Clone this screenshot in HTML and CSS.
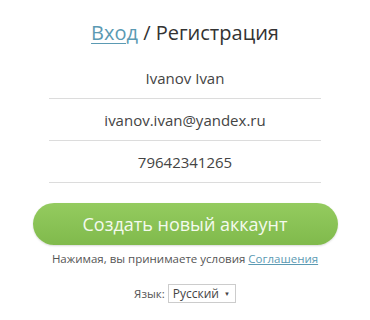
FILE: index.html
```html
<!DOCTYPE html>
<html lang="ru">
<head>
<meta charset="utf-8">
<link rel="stylesheet" href="styles.css">
</head>
<body>
<div class="page">
  <h1 class="title"><a class="title-link" href="#">Вход</a> / Регистрация</h1>
  <div class="fields">
    <div class="field">Ivanov Ivan</div>
    <div class="field">ivanov.ivan@yandex.ru</div>
    <div class="field">79642341265</div>
  </div>
  <button class="btn">Создать новый аккаунт</button>
  <p class="terms">Нажимая, вы принимаете условия <a class="terms-link" href="#">Соглашения</a></p>
  <div class="lang">
    <span class="lang-label">Язык:</span>
    <span class="select">Русский <span class="arrow">▼</span></span>
  </div>
</div>
</body>
</html>
```
FILE: styles.css
```css
html, body {
  margin: 0;
  padding: 0;
  background: #fff;
}
.page {
  width: 370px;
  display: flex;
  flex-direction: column;
  align-items: center;
  font-family: "Open Sans", "Noto Sans", sans-serif;
  color: #333;
}
.title {
  margin: 15px 0 0;
  font-size: 20px;
  font-weight: 400;
  line-height: 36px;
  color: #333;
}
.title-link {
  color: #5b9ab3;
  text-decoration: underline;
  text-decoration-thickness: 1px;
  text-underline-offset: 3px;
}
.fields {
  margin-top: 6px;
  width: 272px;
  display: flex;
  flex-direction: column;
}
.field {
  height: 41px;
  border-bottom: 1px solid #dcdcdc;
  display: flex;
  align-items: center;
  justify-content: center;
  font-size: 15px;
  color: #444;
}
.btn {
  margin-top: 20px;
  width: 305px;
  height: 42px;
  border: none;
  border-radius: 21px;
  background: linear-gradient(#94cb5f, #80ba4c);
  box-shadow: 0 1px 2px rgba(0,0,0,0.15);
  color: #f4faee;
  font-family: "Open Sans", "Noto Sans", sans-serif;
  font-size: 18px;
  padding: 0;
}
.terms {
  margin: 4px 0 0;
  font-size: 11.5px;
  line-height: 20px;
  color: #555;
}
.terms-link {
  color: #5b9ab3;
}
.lang {
  margin-top: 15px;
  display: flex;
  align-items: center;
  gap: 3px;
  font-size: 11.5px;
  color: #555;
}
.select {
  border: 1px solid #ccc;
  height: 19px;
  box-sizing: border-box;
  padding: 0 5px 0 4px;
  display: flex;
  align-items: center;
  gap: 5px;
  font-size: 12px;
  color: #444;
}
.arrow {
  font-size: 6px;
}
```
